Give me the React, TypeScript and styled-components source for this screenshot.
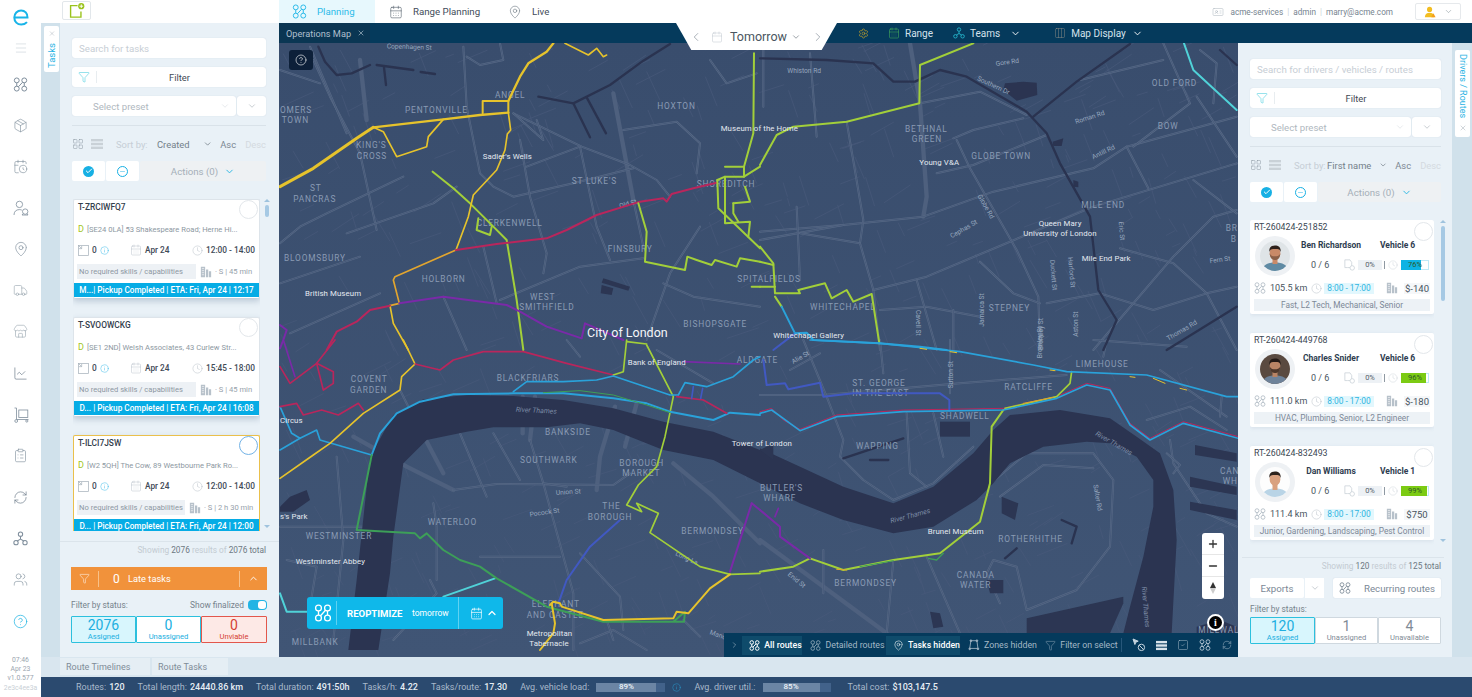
import React from "react";
import styled, { createGlobalStyle } from "styled-components";
import {
  Menu, Package, CalendarClock, MapPin, Truck, Store, ChartLine, ClipboardList, RefreshCw, Users,
  CircleHelp, Funnel, ChevronDown, ChevronUp, ChevronLeft, ChevronRight, LayoutGrid, Check, Minus, Info,
  Clock, Calendar, CalendarDays, Settings, X, Plus, IdCard, SquareCheck, Columns3,
} from "lucide-react";

const Global = createGlobalStyle`
  html, body { margin: 0; padding: 0; width: 1472px; height: 697px; overflow: hidden; background: #fff; }
  body { font-family: "Roboto", "Liberation Sans", sans-serif; color: #3c4a58; }
  * { box-sizing: border-box; }
`;

/* ---------- drawn icons ---------- */
const RouteIcon = ({ size = 14, color = "#7f8e9c", sw = 1 }: { size?: number; color?: string; sw?: number }) => (
  <svg width={size} height={size} viewBox="0 0 16 16" fill="none" stroke={color} strokeWidth={sw * 16 / size}>
    <circle cx="4" cy="3.6" r="2.6" /><circle cx="12" cy="3.6" r="2.6" />
    <circle cx="4" cy="12.4" r="2.6" /><circle cx="12" cy="12.4" r="2.6" />
    <path d="M4 6.2v3.6M12 6.2v3.6M10.2 5.6 5.8 10.4" />
  </svg>
);
const NodesIcon = ({ size = 14, color = "#7f8e9c" }: { size?: number; color?: string }) => (
  <svg width={size} height={size} viewBox="0 0 16 16" fill="none" stroke={color} strokeWidth="1.1">
    <circle cx="8" cy="3.4" r="2.3" /><circle cx="3.2" cy="12.4" r="2.3" /><circle cx="12.8" cy="12.4" r="2.3" />
    <path d="M8 5.7v3M8 8.7 4.5 10.6M8 8.7l3.5 1.9" />
  </svg>
);
const BarsIcon = ({ size = 12, color = "#c9d1d7", t = 2.4 }: { size?: number; color?: string; t?: number }) => (
  <svg width={size} height={size} viewBox="0 0 12 12" fill={color}>
    <rect x="0" y="1" width="12" height={t} /><rect x="0" y={6 - t / 2} width="12" height={t} /><rect x="0" y={11 - t} width="12" height={t} />
  </svg>
);
const UserPinIcon = ({ size = 16, color = "#7f8e9c" }: { size?: number; color?: string }) => (
  <svg width={size} height={size} viewBox="0 0 16 16" fill="none" stroke={color} strokeWidth=".8">
    <circle cx="6.4" cy="4.4" r="3.2" /><path d="M1 15c0-3.4 2-5.4 5.4-5.4 1 0 1.8.2 2.4.5" />
    <circle cx="12.2" cy="11.6" r="2.7" /><path d="M10.2 13.6 9 15h6l-1-1.4" />
  </svg>
);
const CartIcon = ({ size = 16, color = "#7f8e9c" }: { size?: number; color?: string }) => (
  <svg width={size} height={size} viewBox="0 0 16 16" fill="none" stroke={color} strokeWidth=".8">
    <path d="M1.5 1h2v11.5h12" /><rect x="5.8" y="3" width="9" height="7.5" /><circle cx="3.2" cy="14" r="1.4" /><circle cx="13.8" cy="14" r="1.1" />
  </svg>
);
const BuildingsIcon = ({ size = 12, color = "#b7c1ca" }: { size?: number; color?: string }) => (
  <svg width={size} height={size} viewBox="0 0 14 14" fill={color}>
    <path d="M1 1h5v12H1zM7 4h2.6v9H7zM10.4 6H13v7h-2.6z" />
    <path d="M2.2 3h2.6M2.2 5.4h2.6M2.2 7.8h2.6M2.2 10.2h2.6" stroke="#fff" strokeWidth=".7" />
  </svg>
);
const ParcelIcon = ({ size = 12, color = "#c8d0d7" }: { size?: number; color?: string }) => (
  <svg width={size} height={size} viewBox="0 0 14 14" fill="none" stroke={color} strokeWidth=".9">
    <path d="M1 1h6l2 3v4M1 1v9h3M4 10h3" /><circle cx="9.6" cy="10.4" r="2.6" />
  </svg>
);
const SizeIcon = () => (
  <svg width="11" height="11" viewBox="0 0 12 12" fill="none" stroke="#a7b2bc" strokeWidth=".8">
    <rect x=".5" y=".5" width="11" height="11" /><path d="m1 1 3 3M1 4h3V1" />
  </svg>
);
const ZoneIcon = () => (
  <svg width="12" height="12" viewBox="0 0 14 14" fill="none" stroke="#9fb3c2" strokeWidth="1">
    <path d="M3.4 2h7l1.2 9h-9.6z" /><circle cx="3.4" cy="2" r="1" fill="#9fb3c2" /><circle cx="10.4" cy="2" r="1" fill="#9fb3c2" />
    <circle cx="2" cy="11.5" r="1" fill="#9fb3c2" /><circle cx="11.6" cy="11.5" r="1" fill="#9fb3c2" />
  </svg>
);
const CursorOffIcon = () => (
  <svg width="14" height="14" viewBox="0 0 14 14" fill="none" stroke="#c5d4df" strokeWidth="1">
    <path d="M1 1l5.2 2.2-2.4 1-.9 2.3z" fill="#c5d4df" /><circle cx="9.4" cy="9.4" r="3.2" /><path d="m7.2 7.2 4.4 4.4" />
  </svg>
);
const LogoMark = () => (
  <svg width="16" height="17" viewBox="0 0 16 17" fill="none" stroke="#19b4e8" strokeWidth="2">
    <path d="M1.4 8.4h13.1c.1-4-2.6-7-6.4-7C4.300 1.400 1.300 4.500 1.300 8.500c0 4.200 3 7.100 6.900 7.100 2.500 0 4.400-.9 5.800-2.500" />
  </svg>
);
const AddTaskIcon = () => (
  <svg width="16" height="16" viewBox="0 0 15 15" fill="none">
    <path d="M8 2.500H1.500v10.700h9.700V8" stroke="#9ac31c" strokeWidth="1.300" />
    <circle cx="11.500" cy="3" r="2.900" fill="#9ac31c" /><path d="M11.500 1.300v3.400M9.800 3h3.400" stroke="#fff" strokeWidth=".9" />
  </svg>
);
const WarnUserIcon = () => (
  <svg width="12" height="12" viewBox="0 0 14 14" fill="#f2bd21">
    <circle cx="6.500" cy="4" r="3" /><path d="M1 13c.2-3.500 2.400-5 5.500-5s5.300 1.500 5.500 5z" />
    <path d="M11 8.500l2.500 4.500h-5z" fill="#f59e1b" />
  </svg>
);
const CheckDot = () => (
  <CheckCircleWrap><Check size={8} strokeWidth={3} color="#fff" /></CheckCircleWrap>
);
const MinusDot = () => (
  <MinusCircleWrap><Minus size={7} strokeWidth={1.600} color="#17b0e4" /></MinusCircleWrap>
);

/* ---------- portraits ---------- */
type Face = { bg: string; skin: string; hair: string; shirt: string; beard?: string };
const Portrait = ({ bg, skin, hair, shirt, beard }: Face) => (
  <svg width="30" height="30" viewBox="0 0 30 30">
    <clipPath id={"p" + hair + bg}><circle cx="15" cy="15" r="15" /></clipPath>
    <g clipPath={"url(#p" + hair + bg + ")"}>
      <rect width="30" height="30" fill={bg} />
      <path d="M2 31c0-7 5-9.500 13-9.500S28 24 28 31z" fill={shirt} />
      <rect x="12.500" y="17" width="5" height="6" fill={skin} />
      <ellipse cx="15" cy="12" rx="5.400" ry="6.800" fill={skin} />
      {beard && <path d="M9.700 12.500c.4 5 2.600 6.500 5.300 6.500s4.900-1.500 5.300-6.500c-1.300 2.500-3 2.800-5.300 2.800s-4-.3-5.300-2.800z" fill={beard} />}
      <path d="M9.400 11c-.6-4.500 1.800-6.600 5.600-6.600s6.200 2 5.600 6.600c-.6-2.500-1.600-3-5.600-3s-5 .5-5.600 3z" fill={hair} />
    </g>
  </svg>
);

/* ---------- map data (coordinates are in 3x crop space of four quadrants) ---------- */
type Route = [string, string, number?];
type Label = [string, number, number, "d" | "p" | "s" | "i", number?];
type Quad = {
  at: [number, number]; water: string[]; docks: string[]; canals: string[]; wide: string[]; roads: string[]; routes: Route[]; labels: Label[];
};
const Y = "#e6c32c", C = "#b9265c", V = "#7a2aa8", L = "#a2cf3a", B = "#2aa2da", G = "#3d9f58", I = "#4159c2", T = "#50d2d8";
const quads: Quad[] = [
  {
    at: [280, 40], water: [], docks: ["970,715 1050,740 1045,752 965,728", "965,735 1000,745 995,765 962,760"],
    canals: ["115,20 135,65 170,105 215,100 270,75", "290,75 400,90", "422,96 465,102", "312,82 318,135", "775,170 880,190 930,292", "880,190 990,135 1090,62 1170,12", "920,172 978,280"],
    wide: ["1000,160 1060,480", "240,60 260,240"],
    roads: ["100,60 150,170 240,340 290,570", "700,220 905,320 1050,375 1130,420 1170,470", "550,20 560,200 600,400 640,440 700,470 880,430 1060,385", "1060,480 1090,620", "200,580 460,490 530,440", "0,610 60,560 140,520 370,410", "900,320 950,560 990,660", "720,300 750,470 800,640 790,700", "1030,270 1190,245 1260,310 1250,400", "660,780 900,680 1090,655", "740,380 900,320", "1100,900 1170,700 1260,560", "490,770 560,930", "610,620 650,790", "1150,730 1240,770 1440,800", "0,730 240,650", "30,880 300,760", "560,50 600,75 670,60 660,10", "1290,60 1340,130 1430,100", "700,220 790,300 770,240", "0,90 120,130", "90,20 200,280"],
    routes: [
      [L, "458,395 520,445 570,490 640,560 680,600 710,780 730,930"], [L, "595,535 590,570 630,585 635,560"],
      [Y, "0,440 100,385 230,295 280,262", 9], [Y, "280,262 490,238 600,225 685,218", 7], [Y, "608,220 608,183 685,183 685,218"], [Y, "685,183 720,110 745,70 800,35 820,10", 7],
      [Y, "855,10 925,45 950,25 970,50 980,45", 5], [Y, "280,262 310,275 350,350 440,320 445,290 490,238", 5],
      [Y, "685,218 692,270 682,282 675,330 650,390 580,465 565,530 528,630", 5], ["#e2a52f", "528,630 345,710 340,720 358,790 330,797", 5], [Y, "330,797 340,850 385,930", 5],
      [C, "528,630 650,612 800,595 860,570 950,525 1080,485 1150,475 1160,485 1175,462 1240,445 1310,428"], [C, "330,797 270,810 230,845 170,875 140,930"],
      [V, "358,790 490,770 680,795 720,815 800,860 905,895 915,850 1030,900"], [V, "0,855 20,870 10,900 0,925"],
      [L, "1075,490 1100,575 1095,665 1215,690 1222,650 1250,660 1295,675 1305,660 1370,680 1380,655 1440,665"],
      [L, "1312,420 1315,505 1440,625"], [L, "1335,380 1392,380 1392,410 1335,410 1335,550 1410,545 1405,590"], [L, "1392,380 1420,280 1422,40"],
      [L, "1392,410 1440,380"], [L, "1312,420 1335,410"], [L, "1360,490 1410,485 1395,440"], [L, "1360,490 1360,520 1375,545"], [L, "1415,740 1440,740"],
    ],
    labels: [
      ["Copenhagen St", 320, 25, "s", 2], ["OMERS", 0, 218, "d"], ["TOWN", 5, 250, "d"], ["ANGEL", 645, 175, "d"], ["PENTONVILLE", 375, 218, "d"], ["HOXTON", 1132, 207, "d"],
      ["KING'S", 228, 325, "d"], ["CROSS", 230, 356, "d"], ["ST", 90, 453, "d"], ["PANCRAS", 40, 485, "d"], ["ST LUKE'S", 875, 431, "d"], ["CLERKENWELL", 590, 557, "d"],
      ["BLOOMSBURY", 12, 664, "d"], ["HOLBORN", 425, 725, "d"], ["WEST", 750, 781, "d"], ["SMITHFIELD", 718, 811, "d"], ["FINSBURY", 983, 635, "d"], ["SPITALFIELDS", 1372, 727, "d"],
      ["BISHOPSGATE", 1210, 861, "d"], ["SHOREDITCH", 1250, 440, "d"], ["Old St", 1020, 505, "s", -16],
      ["Museum of the Home", 1322, 272, "p"], ["Sadler's Wells", 608, 356, "p"], ["British Museum", 75, 767, "p"],
    ],
  },
  {
    at: [280, 340],
    water: ["0,500 30,470 80,450 90,480 40,515 0,515", "205,930 230,720 270,350 340,225 430,178 560,165 700,168 850,180 1000,205 1150,245 1300,275 1440,330 1440,430 1300,360 1150,330 1050,290 1000,270 900,250 800,262 640,262 560,275 440,300 370,370 340,590 330,700 295,930"],
    docks: [], canals: [],
    wide: ["390,210 490,400", "728,170 728,280", "765,170 750,300", "1005,200 960,350 950,450", "1070,190 1035,320", "220,290 380,380 520,450", "1180,370 1300,470 1440,610"],
    roads: ["520,450 650,432 1000,435 1050,400", "750,300 790,430 880,760 880,930", "900,640 1020,770 1030,870", "0,560 250,560", "900,910 1000,870 1100,930", "790,430 860,440", "340,900 470,760 450,720", "460,490 470,560 470,720", "170,350 190,600 160,900", "540,280 620,470", "600,650 840,650", "980,840 1000,900", "640,280 720,420", "1210,840 1260,890", "860,0 900,50", "1130,30 1300,130", "360,150 430,290", "20,660 110,680 90,800"],
    routes: [
      [B, "0,200 35,280 60,295 110,270 120,300 275,345", 5], [B, "0,330 60,295", 5],
      [C, "0,80 30,130 110,70 160,95 160,130 130,150 110,70", 5], [V, "10,0 45,110", 5], [C, "165,0 110,70", 5],
      [Y, "370,0 405,72 365,110 360,150 250,220 150,310 100,345 0,415", 5],
      [C, "405,72 480,90 520,60 610,35 730,35 860,70 1000,105", 5], [C, "0,200 50,190 70,225 125,210 175,225 235,190 250,210", 5],
      [L, "1100,15 1180,170 1155,290 1130,380 1075,435 1040,495 1085,515 1070,490 1135,520 1110,578 1260,680 1350,703 1440,700", 5],
      [L, "1040,0 1030,95 1000,105", 5], [L, "1040,5 1100,12", 5],
      [B, "275,345 300,280 350,220 420,185 520,163 700,160 850,160 1000,175 1100,190 1170,215 1300,240 1350,218 1440,225", 6],
      [G, "790,158 900,152 1000,165 1100,195 1170,218", 3],
      [B, "700,155 740,125 850,125 950,120 1000,108 1170,165 1195,165 1215,128 1280,140 1360,110 1420,60 1440,50", 5],
      [V, "1210,65 1380,72", 5], [C, "1190,170 1270,180 1340,220", 5], [I, "1240,140 1235,175", 5], [I, "1268,145 1262,175", 5],
      [I, "1020,540 930,620 860,720 835,790"], [V, "1415,490 1350,695"], [V, "1415,490 1440,510"],
      [T, "0,760 20,815 80,815"], [T, "490,770 645,715"],
      [G, "275,345 230,570 405,580 420,595 440,580 490,630 540,660 600,680 650,715 800,800 970,845 1180,845 1212,845 1215,815 1180,845"],
      [Y, "810,795 820,785 840,790 845,800 970,840 1180,835 1190,815 1225,820 1290,745 1350,703"],
      [Y, "815,790 825,850 820,880 780,930"],
    ],
    labels: [
      ["COVENT", 212, 127, "d"], ["GARDEN", 210, 158, "d"], ["BLACKFRIARS", 650, 123, "d"], ["BANKSIDE", 795, 286, "d"], ["SOUTHWARK", 720, 368, "d"], ["BOROUGH", 1018, 378, "d"],
      ["MARKET", 1027, 408, "d"], ["THE", 967, 508, "d"], ["BOROUGH", 923, 540, "d"], ["WATERLOO", 443, 556, "d"], ["WESTMINSTER", 77, 598, "d"], ["BERMONDSEY", 1204, 581, "d"],
      ["ELEPHANT", 755, 802, "d"], ["AND CASTLE", 740, 834, "d"], ["MILLBANK", 35, 915, "d"], ["ALDGATE", 1370, 68, "d"],
      ["Bank of England", 1043, 76, "p"], ["Circus", 0, 250, "p"], ["s's Park", 0, 538, "p"], ["Westminster Abbey", 47, 672, "p"], ["Metropolitan", 740, 888, "p"], ["Tabernacle", 748, 918, "p"], ["Tower of London", 1355, 318, "p"],
      ["River Thames", 707, 215, "i", 3], ["Union St", 828, 465, "s", -4], ["Pocock St", 750, 530, "s", -8], ["Long La", 1185, 645, "s", 25], ["Mandela", 1288, 882, "s", 20],
    ],
  },
  {
    at: [760, 40], water: ["735,130 790,125 830,128 832,165 770,182 730,150", "878,305 910,295 905,318 880,318", "940,420 955,425 955,442 940,440"], docks: [],
    canals: ["0,55 200,60 340,70 400,125 465,125 540,90 620,110 800,215 860,280 900,370 990,530 1015,750 1070,840 1030,930", "1220,930 1430,800", "820,230 950,125 1110,12", "1380,30 1430,75"],
    wide: ["450,10 480,190 500,470 490,530"],
    roads: ["1430,230 1100,320 1000,385 700,455 490,530 250,555 0,575", "0,600 250,555", "480,190 660,155 800,225", "580,295 640,270 790,235", "590,300 630,385 770,630 835,770 840,930", "260,245 310,540 300,610 340,750 360,930", "340,750 500,710 1000,500 1430,370", "530,400 640,375 860,285", "1100,320 1165,445", "1310,170 1430,350", "1210,10 1290,190 1120,320", "860,790 1020,760 1180,810 1340,760 1430,740", "660,665 760,760 840,790", "360,810 500,800 660,830", "1080,625 1240,670 1340,760 1430,930", "1000,930 1240,650 1360,530 1430,510", "960,120 1210,60", "110,500 120,720", "10,10 10,200", "150,40 170,290", "1300,420 1430,520", "470,720 530,930", "580,810 580,930", "1320,30 1370,70 1360,190", "120,580 300,610"],
    routes: [
      [L, "640,10 480,75 478,190 260,245 100,260 50,285 0,375"], [T, "1272,10 1300,90 1430,210"],
      [L, "0,620 40,670 45,760 120,760 115,750 195,730 215,775 260,750 280,785 335,762 358,910"], [L, "0,665 40,675"], [L, "0,740 45,740"],
      [L, "45,770 65,800"], [B, "65,800 105,880"], [I, "105,880 40,930"], [B, "105,880 140,878 160,900 358,910 480,920 560,930"],
    ],
    labels: [
      ["BETHNAL", 435, 275, "d"], ["GREEN", 455, 306, "d"], ["GLOBE TOWN", 634, 358, "d"], ["OLD FORD", 1175, 138, "d"], ["BOW", 1193, 266, "d"], ["MILE END", 964, 503, "d"], ["WHITECHAPEL", 150, 810, "d"], ["STEPNEY", 686, 813, "d"],
      ["BR", 1397, 573, "d"], ["B", 1412, 605, "d"],
      ["Young V&A", 478, 375, "p"], ["Queen Mary", 836, 557, "p"], ["University of London", 790, 587, "p"], ["Mile End Park", 965, 663, "p"], ["Whitechapel Gallery", 40, 895, "p"],
      ["Whiston Rd", 82, 100, "s"], ["Gore Rd", 708, 78, "s", -8], ["Southern Dr", 650, 120, "s", 25], ["Roman Rd", 948, 252, "s", -18], ["Antill Rd", 1000, 358, "s", -26], ["Globe Rd", 652, 468, "s", 60],
      ["Cephas St", 575, 595, "s", -30], ["Eric St", 1076, 545, "s", 85], ["Fern St", 1350, 670, "s", -8], ["Duckett St", 870, 660, "s", 85], ["Harford St", 924, 652, "s", 85], ["Jamaica St", 672, 860, "s", -90],
      ["Cavell St", 468, 810, "s", 90], ["Aston St", 953, 890, "s", -90], ["Bromley St", 848, 930, "s", -90], ["Thomas Rd", 1225, 902, "s", -30],
    ],
  },
  {
    at: [760, 340],
    water: ["0,325 130,385 250,440 400,490 520,440 640,340 700,270 750,225 900,210 1050,235 1130,290 1200,340 1240,450 1250,600 1235,880 1090,880 1110,800 1150,650 1180,500 1180,420 1130,350 1050,310 980,305 850,320 750,370 700,430 650,480 520,560 400,580 250,540 120,490 0,430"],
    docks: ["1305,315 1430,340 1430,365 1305,345", "1290,410 1430,440 1430,465 1290,440", "1290,485 1430,510 1430,540 1290,510", "800,835 1090,770 1090,790 1050,880 800,880", "540,245 630,245 630,290 540,290", "725,470 775,490 765,540 725,520", "510,815 540,820 550,860 520,865", "680,720 730,720 730,760 690,760", "1310,860 1380,840 1430,860 1430,880 1310,880", "0,330 40,310 40,360"],
    canals: ["250,355 430,295", "330,360 385,360", "905,540 950,560 935,610", "735,655 770,625"],
    wide: ["0,600 380,880"],
    roads: ["0,165 190,165 600,130 920,105", "130,0 200,170 250,300 240,350 310,420 400,480 520,430 640,320", "440,220 450,400 500,440", "520,220 550,350", "1160,240 1290,200 1400,270", "1230,300 1240,370 1340,520 1430,560", "680,440 800,340 1000,340 1060,420 1050,620 950,750 800,810 770,680 700,660 680,700 720,790", "720,470 850,375 1000,385", "400,660 380,880", "500,650 600,880", "360,0 370,100", "570,0 570,160", "1000,0 1280,20", "1200,90 1400,230", "1385,170 1380,230", "190,630 190,760", "1220,340 1260,375 1240,400", "1040,0 1030,50", "90,90 180,40"],
    routes: [
      [C, "0,215 35,205 70,240 120,268 230,225 430,210 730,205 890,170 980,130 1050,145 1110,250 1170,295 1270,245 1435,290", 3],
      [L, "735,205 890,170 930,130 935,95", 5], ["#e29a2f", "790,190 880,172", 3],
      [L, "730,210 695,260 690,430 660,545 540,640 400,660 250,690 150,655 100,680 0,695"], [G, "400,662 300,680", 3], ["#e2a52f", "230,688 260,690", 3], [G, "505,655 530,660 550,640", 4],
      [B, "150,0 360,10 600,35 820,75 920,95 1160,105 1400,170 1435,170", 5], [Y, "480,25 500,28", 3], [Y, "570,35 590,38", 3], [Y, "870,90 885,92", 3], [Y, "1110,110 1125,112", 3], [Y, "1180,115 1215,130", 3], [Y, "1260,145 1280,150", 3],
      [I, "10,60 20,135 75,130 85,148 180,128 190,170 280,160 540,160 568,180 568,212"],
      [B, "0,220 35,210 120,272 230,230 430,215 730,210 890,175 980,135 1050,150 1110,255 1170,300 1270,250 1435,295", 5],
      [V, "0,510 60,560 60,590 150,655"], [V, "45,530 55,505", 5],
    ],
    labels: [
      ["LIMEHOUSE", 947, 80, "d"], ["ST. GEORGE", 277, 138, "d"], ["IN THE EAST", 277, 168, "d"], ["RATCLIFFE", 733, 150, "d"], ["SHADWELL", 540, 236, "d"], ["WAPPING", 288, 328, "d"], ["BUTLER'S", 0, 452, "d"], ["WHARF", 10, 482, "d"],
      ["ROTHERHITHE", 715, 605, "d"], ["CANADA", 590, 714, "d"], ["WATER", 600, 744, "d"], ["BERMONDSEY", 223, 737, "d"], ["MILLWAL", 1315, 880, "d"], ["CAN", 1380, 403, "d"], ["WH", 1388, 433, "d"],
      ["Brunel Museum", 503, 582, "p"],
      ["Alie St", 100, 72, "s", -30], ["Sutton St", 578, 145, "s", -90], ["Bromley St", 847, 55, "s", -90], ["Salter Rd", 1000, 435, "s", 80], ["Enid St", 82, 705, "s", 40],
      ["River Thames", 393, 550, "i", -15], ["River Thames", 1005, 285, "i", 30], ["River Thames", 1145, 740, "i", 85],
    ],
  },
];

let seed = 12345;
const rnd = () => { seed = (seed * 1103515245 + 12345) & 0x7fffffff; return seed / 0x7fffffff; };
const streets = Array.from({ length: 620 }, () => {
  const x = 279 + rnd() * 959, y = 43 + rnd() * 614, l = 8 + rnd() * 26, a = (rnd() > .5 ? -.45 : 1.15) + (rnd() - .5) * .3;
  return `M${x.toFixed(1)} ${y.toFixed(1)}l${(Math.cos(a) * l).toFixed(1)} ${(Math.sin(a) * l).toFixed(1)}`;
}).join("");

const labelStyle = {
  d: { fontSize: 25, letterSpacing: 2.5, fill: "#8a9bb4", fontWeight: 400 },
  p: { fontSize: 23.5, letterSpacing: .3, fill: "#e4e9f0", fontWeight: 400 },
  s: { fontSize: 20, letterSpacing: 0, fill: "#97a7be", fontWeight: 400 },
  i: { fontSize: 21, letterSpacing: 0, fill: "#7d8ca6", fontWeight: 400, fontStyle: "italic" as const },
};

const MapCanvas = () => {
  const layer = (render: (q: Quad) => React.ReactNode) =>
    quads.map((q, i) => (
      <g key={i} transform={`translate(${q.at[0]} ${q.at[1]}) scale(${1 / 3})`} fill="none" strokeLinejoin="round" strokeLinecap="round">{render(q)}</g>
    ));
  return (
    <MapSvg viewBox="279 43 959 614" width="959" height="614">
      <defs>
        <linearGradient id="land" x1="0" y1="0" x2="0" y2="1">
          <stop offset="0" stopColor="#394d6d" /><stop offset="1" stopColor="#405575" />
        </linearGradient>
      </defs>
      <rect x="279" y="43" width="959" height="614" fill="url(#land)" />
      <path d={streets} stroke="#47597a" strokeWidth=".7" fill="none" />
      {layer((q) => q.wide.map((p, i) => <polyline key={i} points={p} stroke="#4e607e" strokeWidth="13" />))}
      {layer((q) => q.roads.map((p, i) => (
        <g key={i}><polyline points={p} stroke="#596b87" strokeWidth="6" /><polyline points={p} stroke="#475a7a" strokeWidth="3" /></g>
      )))}
      {layer((q) => q.water.map((p, i) => <polygon key={i} points={p} fill="#2b3451" />))}
      {layer((q) => q.docks.map((p, i) => <polygon key={i} points={p} fill="#2c3653" />))}
      {layer((q) => q.canals.map((p, i) => <polyline key={i} points={p} stroke="#2a3350" strokeWidth="7" />))}
      {layer((q) => q.labels.filter((l) => l[3] !== "p").map((l, i) => (
        <MapText key={i} x={l[1]} y={l[2]} style={labelStyle[l[3]]} transform={l[4] ? `rotate(${l[4]} ${l[1]} ${l[2]})` : undefined}>{l[0]}</MapText>
      )))}
      {layer((q) => q.routes.map((r, i) => <polyline key={i} points={r[1]} stroke={r[0]} strokeWidth={r[2] ?? 6} />))}
      {layer((q) => q.labels.filter((l) => l[3] === "p").map((l, i) => (
        <MapText key={i} x={l[1]} y={l[2]} style={labelStyle.p}>{l[0]}</MapText>
      )))}
      <MapText x="587" y="337" style={{ fontSize: 12.5, fill: "#f4f6f9", fontWeight: 400 }}>City of London</MapText>
    </MapSvg>
  );
};

/* ---------- page frame ---------- */
const Page = styled.div`width: 1472px; height: 697px; display: flex; overflow: hidden; background: #fff;`;
const Rail = styled.nav`width: 41px; flex: none; display: flex; flex-direction: column; align-items: center; background: #fff;`;
const LogoCell = styled.div`height: 36px; padding-top: 9px;`;
const RailIcon = styled.div`height: 41.3px; width: 41px; display: flex; align-items: center; justify-content: center; flex: none;`;
const RailMenu = styled(RailIcon)`height: 24px; margin-bottom: 3.500px;`;
const BuildInfo = styled.div`margin-top: 14px; font-size: 6.8px; line-height: 9.4px; color: #9aa5af; text-align: center;`;
const BuildHash = styled.div`color: #c9d0d6;`;
const Main = styled.div`flex: 1; min-width: 0; display: flex; flex-direction: column;`;
const TopBar = styled.header`height: 23px; flex: none; display: flex; align-items: stretch; background: #fff;`;
const AddCell = styled.div`width: 238px; padding: 1px 0 0 21px;`;
const AddButton = styled.div`width: 29px; height: 19px; border: 1px solid #e2e7eb; border-radius: 2px; display: flex; align-items: center; justify-content: center;`;
const TopTab = styled.div<{ $on?: boolean; $w?: number }>`
  width: ${(p) => (p.$w ? p.$w + "px" : "auto")}; display: flex; align-items: center; gap: 10px; white-space: nowrap;
  padding-left: ${(p) => (p.$on ? "13px" : "14px")}; font-size: 9.7px; color: ${(p) => (p.$on ? "#2cbbe9" : "#3f4c5a")};
  background: ${(p) => (p.$on ? "#e7f8fd" : "transparent")};
`;
const Account = styled.div`margin-left: auto; display: flex; align-items: center; font-size: 8.2px; color: #76838f; gap: 3px; white-space: nowrap;`;
const AccountIcon = styled.span`display: flex; margin-right: 3px;`;
const AccountSep = styled.span`color: #ccd3d9; padding: 0 1px;`;
const UserButton = styled.div`width: 46px; height: 17px; margin: 0 11px 0 19px; border: 1px solid #e6e9ec; border-radius: 2px; display: flex; align-items: center; justify-content: center; gap: 8px;`;
const Body = styled.div`height: 634px; flex: none; display: flex;`;
const Workspace = styled.div`flex: 1; min-width: 0; display: flex; flex-direction: column; position: relative;`;
const NavBar = styled.div`height: 20px; flex: none; display: flex; align-items: center; background: #053a5c; color: #d5e2ec; font-size: 10px;`;
const OpsTab = styled.div`width: 91px; height: 20px; flex: none; display: flex; align-items: center; justify-content: space-between; padding: 0 5px 0 7px; background: #0a3653; color: #aebfcd; font-size: 9.2px; white-space: nowrap;`;
const NavItems = styled.div`display: flex; align-items: center; margin-left: 488px;`;
const NavItem = styled.div<{ $gap?: number }>`display: flex; align-items: center; gap: 5px; margin-right: ${(p) => p.$gap ?? 0}px;`;
const DateSwitch = styled.div`
  position: absolute; left: 397px; top: 0; width: 161px; height: 27px; background: #fff; z-index: 3;
  clip-path: polygon(0 0, 100% 0, 90.5% 100%, 9.500% 100%);
  display: flex; align-items: center; color: #4a5661; font-size: 12.5px; padding-left: 13px;
`;
const DateLabel = styled.span`margin: 0 4px 0 7px;`;
const DateCal = styled.span`margin-left: 8px; display: flex;`;
const DateNext = styled.span`margin-left: 10px; display: flex;`;
const Stage = styled.div`flex: 1; min-height: 0; display: flex;`;
const MapArea = styled.main`width: 959px; height: 614px; flex: none; position: relative; overflow: hidden; background: #394d6d;`;
const MapSvg = styled.svg`display: block; font-family: "Roboto", "Liberation Sans", sans-serif;`;
const MapText = styled.text``;
const HelpChip = styled.div`position: absolute; left: 10px; top: 7px; width: 24px; height: 20px; background: #0d2039; border-radius: 3px; display: flex; align-items: center; justify-content: center;`;
const Reopt = styled.div`position: absolute; left: 28px; top: 554px; width: 196px; height: 32px; background: #0fb8ea; border-radius: 3px; display: flex; align-items: center; color: #fff;`;
const ReoptIcon = styled.div`width: 23px; height: 24px; margin-left: 7px; display: flex; align-items: center; border-right: 1px solid #5fd2f2;`;
const ReoptTitle = styled.span`margin-left: 10px; font-size: 9.6px; font-weight: 700; width: 65px;`;
const ReoptSub = styled.span`font-size: 8.5px; width: 46px;`;
const ReoptMenu = styled.div`height: 32px; border-left: 1px solid #5fd2f2; padding-left: 11px; display: flex; align-items: center; gap: 3px;`;
const ZoomBox = styled.div`position: absolute; left: 923px; top: 490px; width: 22px; height: 66px; background: #fff; border-radius: 3px; display: grid; grid-template-rows: repeat(3, 1fr);`;
const ZoomCell = styled.div`display: flex; align-items: center; justify-content: center; border-bottom: 1px solid #e6e6e6; &:last-child { border: 0; }`;
const Compass = styled.div`display: flex; flex-direction: column; align-items: center; gap: 0;`;
const ArrowUp = styled.i`width: 0; height: 0; border: 3.500px solid transparent; border-top: 0; border-bottom: 6px solid #333;`;
const ArrowDown = styled.i`width: 0; height: 0; border: 3.500px solid transparent; border-bottom: 0; border-top: 6px solid #ccc;`;
const InfoChip = styled.div`position: absolute; left: 928px; top: 571px; width: 17px; height: 17px; border-radius: 50%; background: #000; border: 2px solid #fff; color: #fff; font: 700 10px/13px "Liberation Serif", serif; text-align: center;`;
const MapTools = styled.div`position: absolute; right: 0; bottom: 0; width: 514px; height: 24px; background: #053a5c; display: flex; align-items: center; color: #a3b8c6; font-size: 8.8px; padding-left: 6px;`;
const ToolItem = styled.div<{ $on?: boolean; $w: number; $ml?: number }>`
  width: ${(p) => p.$w}px; height: 19px; display: flex; align-items: center; justify-content: center; gap: 4px; flex: none; white-space: nowrap;
  margin-left: ${(p) => p.$ml ?? 0}px; padding-left: 7px;
  background: ${(p) => (p.$on ? "#0f4b6b" : "transparent")}; color: ${(p) => (p.$on ? "#fff" : "#a3b8c6")}; font-weight: ${(p) => (p.$on ? 500 : 400)};
`;
const ToolSep = styled.i`width: 1px; height: 14px; margin: 0 6px 0 3px; background: #27577a; flex: none;`;
const ToolIcon = styled.div`width: 22px; flex: none; display: flex; justify-content: center;`;

/* ---------- side panels ---------- */
const SideStrip = styled.div`width: 19px; flex: none; background: #d0e1eb; padding: 3px 0 0 3px;`;
const RightStrip = styled(SideStrip)`width: 20px; padding: 7px 0 0 3px;`;
const SideTab = styled.div<{ $h: number }>`
  width: 15px; height: ${(p) => p.$h}px; background: #fff; border-radius: 2px; display: flex; flex-direction: column; align-items: center; gap: 6px; padding: 4px 0;
  color: #2bb4e4; font-size: 9.5px;
`;
const VerticalUp = styled.span`writing-mode: vertical-rl; transform: rotate(180deg); white-space: nowrap;`;
const VerticalDown = styled.span`writing-mode: vertical-rl; white-space: nowrap; flex: none; font-size: 9px;`;
const Panel = styled.aside<{ $w: number; $pt: number; $pl: number; $pr: number }>`
  width: ${(p) => p.$w}px; flex: none; background: #e9f1f7; display: flex; flex-direction: column;
  padding: ${(p) => p.$pt}px ${(p) => p.$pr}px 0 ${(p) => p.$pl}px;
`;
const Field = styled.div`height: 20px; flex: none; background: #fff; border-radius: 3px; font-size: 9.7px; color: #c7ced5; display: flex; align-items: center; padding-left: 7px; box-shadow: 0 0 1px rgba(90,120,150,.25); white-space: nowrap;`;
const FilterBtn = styled(Field)`margin-top: 9px; padding-left: 6px; color: #3f4a55; font-size: 9.4px;`;
const FilterIcon = styled.div`width: 19px; height: 12px; border-right: 1px solid #e8edf0; display: flex; align-items: center; margin-right: 0;`;
const FilterLabel = styled.span`flex: 1; text-align: center; padding-right: 4px;`;
const Preset = styled.div`margin-top: 9px; display: flex; gap: 1px; height: 20px; flex: none;`;
const PresetMain = styled(Field)`flex: 1; padding: 0 6px 0 21px; justify-content: space-between; color: #b0b8c0; font-size: 9.6px;`;
const PresetMore = styled(Field)`width: 29px; justify-content: center; padding: 0;`;
const Rule = styled.div`height: 1px; flex: none; background: #d9e2e9; margin-top: 9px;`;
const SortRow = styled.div`margin-top: 9px; height: 18px; flex: none; display: flex; align-items: center; font-size: 9.4px; color: #8b96a0; white-space: nowrap;`;
const SortIcons = styled.div`display: flex; align-items: center; gap: 7px; width: 44px; flex: none;`;
const SortFaint = styled.span`color: #c6ced6; width: 30px; flex: none;`;
const SortChosen = styled.span<{ $w: number; $ml: number }>`width: ${(p) => p.$w}px; margin-left: ${(p) => p.$ml}px; flex: none; color: #737f8a;`;
const SortDesc = styled.span`margin-left: 9px; color: #d4dae0;`;
const SortAsc = styled.span`margin-left: 8px; color: #7c8792;`;
const ActionRow = styled.div`margin-top: 8px; height: 20px; flex: none; display: flex; gap: 1px;`;
const ActionCell = styled.div`width: 33px; background: #fff; display: flex; align-items: center; justify-content: center; border-radius: 2px;`;
const ActionMenu = styled.div`flex: 1; background: #eef1f3; font-size: 9.7px; color: #a5afb8; display: flex; align-items: center; justify-content: center; gap: 6px; border-radius: 2px;`;
const CheckCircleWrap = styled.div`width: 11px; height: 11px; border-radius: 50%; background: #17b0e4; display: flex; align-items: center; justify-content: center;`;
const MinusCircleWrap = styled.div`width: 11px; height: 11px; border-radius: 50%; border: 1px solid #17b0e4; display: flex; align-items: center; justify-content: center;`;
const ListRow = styled.div<{ $h: number; $mt: number }>`margin-top: ${(p) => p.$mt}px; height: ${(p) => p.$h}px; flex: none; display: flex; align-items: stretch;`;
const CardList = styled.div<{ $w: number; $ml: number; $gap: number }>`width: ${(p) => p.$w}px; margin-left: ${(p) => p.$ml}px; flex: none; overflow: hidden; display: flex; flex-direction: column; gap: ${(p) => p.$gap}px; padding-bottom: 3px;`;
const Track = styled.div<{ $ml: number }>`width: 8px; margin-left: ${(p) => p.$ml}px; display: flex; flex-direction: column; align-items: center;`;
const TrackUp = styled.i`width: 0; height: 0; border: 3px solid transparent; border-top: 0; border-bottom: 3.500px solid #9fc3de;`;
const TrackDown = styled.i`margin-top: auto; margin-bottom: 3px; width: 0; height: 0; border: 3px solid transparent; border-bottom: 0; border-top: 3.500px solid #9fc3de;`;
const TrackThumb = styled.i<{ $h: number }>`width: 4px; height: ${(p) => p.$h}px; margin-top: 3px; border-radius: 2px; background: #a6c9e4;`;

const TaskCardBox = styled.article<{ $hot?: boolean }>`
  height: 99px; flex: none; position: relative; background: #fff; display: flex; flex-direction: column; border-radius: 2px;
  border: 1px solid ${(p) => (p.$hot ? "#eac04c" : "#dde4ea")}; border-bottom: 0;
  box-shadow: 0 3px 6px rgba(60,90,125,.28); 
`;
const CardId = styled.div`height: 15px; padding: 2px 0 0 4px; font-size: 8.4px; font-weight: 500; color: #33404c;`;
const Tick = styled.i<{ $hot?: boolean }>`position: absolute; right: 1px; top: 0; width: 19px; height: 19px; border-radius: 50%; border: 1px solid ${(p) => (p.$hot ? "#72b2e6" : "#e3e7eb")}; background: #fff;`;
const CardAddr = styled.div`margin-top: 6px; height: 16px; padding-left: 4px; display: flex; align-items: center; font-size: 7.6px; color: #8d98a2; white-space: nowrap;`;
const LimeD = styled.span`color: #9fc522; margin-right: 3px; font-size: 9px;`;
const CardMeta = styled.div`margin-top: 5px; height: 16px; padding-left: 4px; display: grid; grid-template-columns: 52px 62px 1fr; align-items: center; font-size: 8.3px; font-weight: 500; color: #3f4b57; white-space: nowrap;`;
const MetaPart = styled.div`display: flex; align-items: center; gap: 3px;`;
const CardSkills = styled.div`margin-top: 6px; height: 15px; padding-left: 3px; display: flex; align-items: center; font-size: 7.6px; color: #97a2ab; white-space: nowrap;`;
const SkillsTag = styled.span<{ $w?: number }>`background: #edf1f5; height: 15px; display: flex; align-items: center; padding: 0 2px; margin-right: 4px; color: #8d98a3; min-width: ${(p) => p.$w ?? 0}px;`;
const Duration = styled.span`margin-left: 3px;`;
const CardStatus = styled.div`margin-top: 4px; height: 14px; background: #06ace5; color: #fff; font-size: 8.2px; font-weight: 500; display: flex; align-items: center; justify-content: center; white-space: nowrap;`;

const RouteCardBox = styled.article`height: 94px; flex: none; position: relative; background: #fff; border-radius: 2px; padding: 0 2px 0 4px; box-shadow: 0 1px 4px rgba(70,100,130,.12);`;
const RouteId = styled.div`height: 14px; padding-top: 2px; font-size: 8.8px; color: #3b4753;`;
const RouteTick = styled(Tick)`right: 1px; top: 2px; z-index: 1;`;
const RouteMid = styled.div`height: 43px; display: flex;`;
const AvatarRing = styled.div`width: 40px; height: 40px; margin: 2px 6px 0 1px; border-radius: 50%; background: #eef1f4; display: flex; align-items: center; justify-content: center; flex: none;`;
const RouteInfo = styled.div`flex: 1; display: flex; flex-direction: column;`;
const NameRow = styled.div`margin-top: 4px; height: 14px; display: grid; grid-template-columns: 60px 1fr; align-items: center; font-size: 8.5px; font-weight: 700; color: #2e3d50; white-space: nowrap;`;
const NameCell = styled.span`text-align: center;`;
const VehicleCell = styled.span`padding-left: 19px;`;
const StatRow = styled.div`margin-top: 6px; height: 14px; display: flex; align-items: center; font-size: 8.8px; color: #4a5662;`;
const Trips = styled.span`width: 43px; padding-left: 10px; font-size: 9px;`;
const LoadPill = styled.span`width: 24px; height: 10px; margin-left: 2px; background: #edf1f5; font-size: 7.5px; text-align: center; line-height: 10px; color: #555f69;`;
const Pipe = styled.i`width: 1px; height: 8px; margin: 0 3px 0 2px; background: #8f99a2;`;
const Meter = styled.div`width: 28px; height: 10px; margin-left: 3px; background: #fff; border: 1px solid #bfe9f7; position: relative; font-size: 7.5px; text-align: center; line-height: 8px; color: #2f5a2a;`;
const MeterFill = styled.i<{ $c: string }>`position: absolute; left: -1px; top: -1px; bottom: -1px; background: ${(p) => p.$c};`;
const MeterText = styled.span`position: relative;`;
const MetricRow = styled.div`margin-top: 3px; height: 16px; display: flex; align-items: center; font-size: 9px; color: #475460; white-space: nowrap;`;
const Km = styled.span`width: 41px; margin-left: 4px;`;
const TimePill = styled.span`margin-left: 2px; width: 50px; height: 11px; background: #e2f7fd; color: #2fb5df; font-size: 8.4px; line-height: 11px; text-align: center;`;
const CostIcon = styled.span`margin-left: 12px; width: 18px; display: flex;`;
const Cost = styled.span`width: 26px; text-align: center; font-size: 9.5px; background: #f5f7f9;`;
const RouteSkills = styled.div`margin: 3px 2px 0 0; height: 12px; background: #edf2f6; font-size: 8.3px; color: #7c8896; text-align: center; line-height: 12px; white-space: nowrap;`;

const PanelFoot = styled.div<{ $ml: number; $mr: number; $mt: number }>`margin: ${(p) => p.$mt}px ${(p) => -p.$mr}px 0 ${(p) => -p.$ml}px; border-top: 1px solid #dbe4eb; flex: none;`;
const Showing = styled.div`height: 17px; flex: none; text-align: right; font-size: 8.3px; color: #6d7882; line-height: 17px; white-space: nowrap;`;
const Faint = styled.span`color: #c3cbd2;`;
const LateBar = styled.div`margin: 8px -1px 0; height: 23px; flex: none; background: #f1923b; color: #fff; display: flex; align-items: center; font-size: 10px;`;
const LateIcon = styled.div`width: 28px; height: 16px; border-right: 1px solid #f8c188; display: flex; align-items: center; padding-left: 8px;`;
const LateCount = styled.span`margin-left: 14px; font-size: 12px; width: 15px;`;
const LateLabel = styled.span`flex: 1; font-size: 9.3px; font-weight: 400;`;
const LateMore = styled.div`width: 28px; height: 16px; border-left: 1px solid #f8c188; display: flex; align-items: center; justify-content: center;`;
const FinalRow = styled.div`margin: 10px -1px 0; height: 10px; flex: none; display: flex; align-items: center; justify-content: space-between; font-size: 8.4px; color: #76828c; white-space: nowrap;`;
const FinalRight = styled.div`display: flex; align-items: center; gap: 4px;`;
const Toggle = styled.div`width: 19px; height: 10px; border-radius: 4px; background: #22b4e4; display: flex; justify-content: flex-end; padding: 1px;`;
const ToggleKnob = styled.i`width: 8px; height: 8px; border-radius: 3px; background: #fff;`;
const StatusGrid = styled.div<{ $mt: number; $mx: number; $c2: number }>`margin: ${(p) => p.$mt}px ${(p) => p.$mx}px 0; height: 27px; flex: none; display: grid; grid-template-columns: 65px ${(p) => p.$c2}px 1fr;`;
const tones = {
  on: { bg: "#d8f6fd", bd: "#2cc0dd", fg: "#20aee0" },
  cyan: { bg: "#fff", bd: "#2cc0dd", fg: "#20aee0" },
  red: { bg: "#fde9e6", bd: "#e2574c", fg: "#d43d33" },
  off: { bg: "#fff", bd: "#cfd8df", fg: "#7f8b96" },
};
const StatusBox = styled.div<{ $t: keyof typeof tones }>`
  background: ${(p) => tones[p.$t].bg}; border: 1px solid ${(p) => tones[p.$t].bd}; color: ${(p) => tones[p.$t].fg};
  display: flex; flex-direction: column; align-items: center; justify-content: center; border-radius: 1px;
`;
const StatusNum = styled.b`font-size: 14px; line-height: 14px; font-weight: 400;`;
const StatusName = styled.span`font-size: 7.6px; line-height: 9px;`;
const ExportRow = styled.div`margin-top: 3px; height: 20px; flex: none; display: flex; font-size: 9.7px; color: #7b8896; white-space: nowrap;`;
const ExportBtn = styled.div`width: 54px; background: #fff; display: flex; align-items: center; justify-content: center; border-radius: 2px;`;
const ExportMore = styled.div`width: 19px; margin-left: 1px; background: #fff; display: flex; align-items: center; justify-content: center;`;
const Recurring = styled.div`width: 108px; margin-left: 9px; background: #fff; display: flex; align-items: center; padding-left: 6px; gap: 13px; border-radius: 2px; box-shadow: 0 0 1px rgba(90,120,150,.3);`;
const FilterBy = styled.div`margin-top: 6px; height: 10px; line-height: 10px; font-size: 8.4px; color: #76828c; flex: none;`;

const BottomTabs = styled.div`height: 20px; flex: none; display: flex; padding: 1px 0 2px 19px; gap: 2px; background: #d9e6ef; font-size: 9px; color: #7f8c98;`;
const BottomTab = styled.div<{ $w: number }>`width: ${(p) => p.$w}px; background: #e5eef4; display: flex; align-items: center; padding-left: 6px; white-space: nowrap;`;
const StatusBar = styled.footer`height: 20px; flex: none; display: flex; align-items: center; padding-left: 35px; gap: 13px; background: #2b4a6f; color: #a9b9cb; font-size: 9px; white-space: nowrap;`;
const Stat = styled.div`display: flex; align-items: center; gap: 3px;`;
const StatVal = styled.b`color: #e6edf4; font-weight: 500;`;
const Bar = styled.div<{ $w: number }>`width: ${(p) => p.$w}px; height: 9px; margin: 0 4px; background: #42628a; position: relative;`;
const BarFill = styled.div`height: 9px; background: #6b85a4; color: #eef3f8; font-size: 8px; font-weight: 500; line-height: 8px; text-align: center;`;

type Task = { id: string; addr: string; time: string; skills: string; dur: string; status: string; hot?: boolean };
const tasks: Task[] = [
  { id: "T-ZRCIWFQ7", addr: "[SE24 0LA] 53 Shakespeare Road; Herne Hi...", time: "12:00 - 14:00", skills: "No required skills / capabilities", dur: "· S | 45 min", status: "M...| Pickup Completed | ETA: Fri, Apr 24 | 12:17" },
  { id: "T-SVOOWCKG", addr: "[SE1 2ND] Welsh Associates, 43 Curlew Str...", time: "15:45 - 18:00", skills: "No required skills / capabilities", dur: "· S | 45 min", status: "D... | Pickup Completed | ETA: Fri, Apr 24 | 16:08" },
  { id: "T-ILCI7JSW", addr: "[W2 5QH] The Cow, 89 Westbourne Park Ro...", time: "12:00 - 14:00", skills: "No required skills / capabilities", dur: "· S | 2 h 30 min", status: "D... | Pickup Completed | ETA: Fri, Apr 24 | 12:00", hot: true },
];
type Rt = { id: string; name: string; veh: string; util: number; km: string; cost: string; skills: string; face: Face };
const routes: Rt[] = [
  { id: "RT-260424-251852", name: "Ben Richardson", veh: "Vehicle 6", util: 76, km: "105.5 km", cost: "$-140", skills: "Fast, L2 Tech, Mechanical, Senior", face: { bg: "#dfe4e7", skin: "#c88a68", hair: "#2e211b", shirt: "#5f8aa3", beard: "#8a6048" } },
  { id: "RT-260424-449768", name: "Charles Snider", veh: "Vehicle 6", util: 96, km: "111.0 km", cost: "$-180", skills: "HVAC, Plumbing, Senior, L2 Engineer", face: { bg: "#5a4a40", skin: "#b98465", hair: "#241a16", shirt: "#6e8299", beard: "#4e382c" } },
  { id: "RT-260424-832493", name: "Dan Williams", veh: "Vehicle 1", util: 99, km: "111.4 km", cost: "$750", skills: "Junior, Gardening, Landscaping, Pest Control", face: { bg: "#fdfdfd", skin: "#d9a17f", hair: "#2d231d", shirt: "#b9d4e6" } },
];

const TaskCard = ({ t }: { t: Task }) => (
  <TaskCardBox $hot={t.hot}>
    <CardId>{t.id}</CardId>
    <Tick $hot={t.hot} />
    <CardAddr><LimeD>D</LimeD>{t.addr}</CardAddr>
    <CardMeta>
      <MetaPart><SizeIcon /><span>0</span><Info size={9} color="#2db6e6" strokeWidth={1.200} /></MetaPart>
      <MetaPart><CalendarDays size={12} color="#b3bdc6" strokeWidth={.9} /><span>Apr 24</span></MetaPart>
      <MetaPart><Clock size={11} color="#aab4bd" strokeWidth={.9} /><span>{t.time}</span></MetaPart>
    </CardMeta>
    <CardSkills><SkillsTag $w={t.hot ? 0 : 119}>{t.skills}</SkillsTag><BuildingsIcon /><Duration>{t.dur}</Duration></CardSkills>
    <CardStatus>{t.status}</CardStatus>
  </TaskCardBox>
);

const RouteCard = ({ r }: { r: Rt }) => (
  <RouteCardBox>
    <RouteId>{r.id}</RouteId>
    <RouteTick />
    <RouteMid>
      <AvatarRing><Portrait {...r.face} /></AvatarRing>
      <RouteInfo>
        <NameRow><NameCell>{r.name}</NameCell><VehicleCell>{r.veh}</VehicleCell></NameRow>
        <StatRow>
          <Trips>0 / 6</Trips><ParcelIcon />
          <LoadPill>0%</LoadPill><Pipe /><Clock size={10} color="#c0c9d1" strokeWidth={.9} />
          <Meter>
            <MeterFill $c={r.util > 90 ? "#7ccb13" : "#0db3e4"} style={{ width: r.util + "%" }} />
            <MeterText>{r.util}%</MeterText>
          </Meter>
        </StatRow>
      </RouteInfo>
    </RouteMid>
    <MetricRow>
      <RouteIcon size={12} color="#bcc5cd" /><Km>{r.km}</Km>
      <Clock size={11} color="#a9b3bc" strokeWidth={.9} />
      <TimePill>8:00 - 17:00</TimePill>
      <CostIcon><BuildingsIcon /></CostIcon><Cost>{r.cost}</Cost>
    </MetricRow>
    <RouteSkills>{r.skills}</RouteSkills>
  </RouteCardBox>
);

const SearchBlock = ({ placeholder, sort, sortW, sortMl }: { placeholder: string; sort: string; sortW: number; sortMl: number }) => (
  <>
    <Field>{placeholder}</Field>
    <FilterBtn><FilterIcon><Funnel size={12} color="#2fc4d8" strokeWidth={1} /></FilterIcon><FilterLabel>Filter</FilterLabel></FilterBtn>
    <Preset>
      <PresetMain>Select preset<ChevronDown size={10} color="#c4ccd3" strokeWidth={1} /></PresetMain>
      <PresetMore><ChevronDown size={10} color="#7b8892" strokeWidth={1} /></PresetMore>
    </Preset>
    <Rule />
    <SortRow>
      <SortIcons><LayoutGrid size={12} color="#8a96a1" strokeWidth={1} /><BarsIcon /></SortIcons>
      <SortFaint>Sort by:</SortFaint>
      <SortChosen $w={sortW} $ml={sortMl}>{sort}</SortChosen>
      <ChevronDown size={10} color="#4a5661" strokeWidth={1.500} />
      <SortAsc>Asc</SortAsc><SortDesc>Desc</SortDesc>
    </SortRow>
    <ActionRow>
      <ActionCell><CheckDot /></ActionCell><ActionCell><MinusDot /></ActionCell>
      <ActionMenu>Actions (0)<ChevronDown size={11} color="#25b5e3" strokeWidth={2} /></ActionMenu>
    </ActionRow>
  </>
);

const railIcons = [
  <RouteIcon size={15} />, <Package size={15} color="#7f8e9c" strokeWidth={1} />, <CalendarClock size={15} color="#7f8e9c" strokeWidth={1} />,
  <UserPinIcon />, <MapPin size={16} color="#7f8e9c" strokeWidth={1} />, <Truck size={15} color="#9aa6b1" strokeWidth={1} />,
  <Store size={15} color="#9aa6b1" strokeWidth={1} />, <ChartLine size={15} color="#5f6f7e" strokeWidth={1} />, <CartIcon />,
  <ClipboardList size={15} color="#7f8e9c" strokeWidth={1} />, <RefreshCw size={15} color="#5f6f7e" strokeWidth={1} />, <NodesIcon size={15} />,
  <Users size={15} color="#7f8e9c" strokeWidth={1} />, <CircleHelp size={15} color="#25b5e3" strokeWidth={1.200} />,
];

export default function App() {
  return (
    <Page>
      <Global />
      <Rail>
        <LogoCell><LogoMark /></LogoCell>
        <RailMenu><Menu size={14} color="#c6ced5" strokeWidth={1} /></RailMenu>
        {railIcons.map((icon, i) => <RailIcon key={i}>{icon}</RailIcon>)}
        <BuildInfo>07:46<br />Apr 23<br />v1.0.577<BuildHash>2e3c4ee3a</BuildHash></BuildInfo>
      </Rail>
      <Main>
        <TopBar>
          <AddCell><AddButton><AddTaskIcon /></AddButton></AddCell>
          <TopTab $on $w={96}><RouteIcon size={15} color="#2cbbe9" /><span>Planning</span></TopTab>
          <TopTab $w={119}><CalendarDays size={14} color="#4d5a66" strokeWidth={1} /><span>Range Planning</span></TopTab>
          <TopTab><MapPin size={14} color="#67737e" strokeWidth={1} /><span>Live</span></TopTab>
          <Account>
            <AccountIcon><IdCard size={12} color="#aab4bd" strokeWidth={1} /></AccountIcon>
            <span>acme-services</span><AccountSep>|</AccountSep><span>admin</span><AccountSep>|</AccountSep><span>marry@acme.com</span>
            <UserButton><WarnUserIcon /><ChevronDown size={9} color="#7b8892" strokeWidth={1.300} /></UserButton>
          </Account>
        </TopBar>
        <Body>
          <SideStrip>
            <SideTab $h={46}><X size={8} color="#8d99a4" strokeWidth={1.200} /><VerticalUp>Tasks</VerticalUp></SideTab>
          </SideStrip>
          <Panel $w={219} $pt={15} $pl={12} $pr={13}>
            <SearchBlock placeholder="Search for tasks" sort="Created" sortW={46} sortMl={11} />
            <ListRow $mt={18} $h={332}>
              <CardList $w={187} $ml={1} $gap={19}>{tasks.map((t) => <TaskCard key={t.id} t={t} />)}</CardList>
              <Track $ml={4}><TrackUp /><TrackThumb $h={12} /><TrackDown /></Track>
            </ListRow>
            <PanelFoot $ml={12} $mr={13} $mt={10} />
            <Showing><Faint>Showing</Faint> 2076 <Faint>results of</Faint> 2076 total</Showing>
            <LateBar>
              <LateIcon><Funnel size={11} color="#fff" strokeWidth={1.100} /></LateIcon>
              <LateCount>0</LateCount><LateLabel>Late tasks</LateLabel>
              <LateMore><ChevronUp size={11} color="#fff" strokeWidth={2} /></LateMore>
            </LateBar>
            <FinalRow><span>Filter by status:</span><FinalRight>Show finalized<Toggle><ToggleKnob /></Toggle></FinalRight></FinalRow>
            <StatusGrid $mt={6} $mx={-1} $c2={65}>
              <StatusBox $t="on"><StatusNum>2076</StatusNum><StatusName>Assigned</StatusName></StatusBox>
              <StatusBox $t="cyan"><StatusNum>0</StatusNum><StatusName>Unassigned</StatusName></StatusBox>
              <StatusBox $t="red"><StatusNum>0</StatusNum><StatusName>Unviable</StatusName></StatusBox>
            </StatusGrid>
          </Panel>
          <Workspace>
            <NavBar>
              <OpsTab>Operations Map<X size={8} color="#d8e3ea" strokeWidth={1.600} /></OpsTab>
              <NavItems>
                <NavItem $gap={19}><Settings size={11} color="#d6ac25" strokeWidth={1.300} /></NavItem>
                <NavItem $gap={20}><CalendarDays size={12} color="#48b25a" strokeWidth={1.100} /><span>Range</span></NavItem>
                <NavItem $gap={10}><NodesIcon size={12} color="#27c0d6" /><span>Teams</span></NavItem>
                <NavItem $gap={33}><ChevronDown size={11} color="#fff" strokeWidth={2} /></NavItem>
                <NavItem $gap={6}><Columns3 size={12} color="#8a8b84" strokeWidth={1} /><span>Map Display</span></NavItem>
                <ChevronDown size={11} color="#fff" strokeWidth={2} />
              </NavItems>
            </NavBar>
            <DateSwitch>
              <ChevronLeft size={14} color="#6f7b86" strokeWidth={1} />
              <DateCal><Calendar size={12} color="#bfc7ce" strokeWidth={1} /></DateCal>
              <DateLabel>Tomorrow</DateLabel>
              <ChevronDown size={10} color="#59646e" strokeWidth={1.400} />
              <DateNext><ChevronRight size={14} color="#6f7b86" strokeWidth={1} /></DateNext>
            </DateSwitch>
            <Stage>
              <MapArea>
                <MapCanvas />
                <HelpChip><CircleHelp size={12} color="#fff" strokeWidth={1.200} /></HelpChip>
                <Reopt>
                  <ReoptIcon><RouteIcon size={18} color="#fff" sw={1.300} /></ReoptIcon>
                  <ReoptTitle>REOPTIMIZE</ReoptTitle><ReoptSub>tomorrow</ReoptSub>
                  <ReoptMenu><CalendarDays size={13} color="#fff" strokeWidth={1.300} /><ChevronUp size={12} color="#fff" strokeWidth={2.400} /></ReoptMenu>
                </Reopt>
                <ZoomBox>
                  <ZoomCell><Plus size={12} color="#333" strokeWidth={2.600} /></ZoomCell>
                  <ZoomCell><Minus size={12} color="#333" strokeWidth={2.600} /></ZoomCell>
                  <ZoomCell><Compass><ArrowUp /><ArrowDown /></Compass></ZoomCell>
                </ZoomBox>
                <InfoChip>i</InfoChip>
                <MapTools>
                  <ChevronRight size={12} color="#c3d2dc" strokeWidth={1.300} />
                  <ToolItem $on $w={60} $ml={3}><RouteIcon size={11} color="#fff" />All routes</ToolItem>
                  <ToolItem $w={84}><RouteIcon size={11} color="#7f9bad" />Detailed routes</ToolItem>
                  <ToolItem $on $w={74}><MapPin size={11} color="#fff" strokeWidth={1.200} />Tasks hidden</ToolItem>
                  <ToolItem $w={78}><ZoneIcon />Zones hidden</ToolItem>
                  <ToolItem $w={80}><Funnel size={11} color="#9fb3c2" strokeWidth={1} />Filter on select</ToolItem>
                  <ToolSep />
                  <ToolIcon><CursorOffIcon /></ToolIcon>
                  <ToolIcon><BarsIcon size={11} color="#d7e2ea" t={2.600} /></ToolIcon>
                  <ToolIcon><SquareCheck size={12} color="#a9bdcb" strokeWidth={1} /></ToolIcon>
                  <ToolIcon><RouteIcon size={12} color="#a9bdcb" /></ToolIcon>
                  <ToolIcon><RefreshCw size={10} color="#a9bdcb" strokeWidth={1.200} /></ToolIcon>
                </MapTools>
              </MapArea>
              <Panel $w={214} $pt={16} $pl={12} $pr={11}>
                <SearchBlock placeholder="Search for drivers / vehicles / routes" sort="First name" sortW={52} sortMl={3} />
                <ListRow $mt={18} $h={325}>
                  <CardList $w={184} $ml={0} $gap={19}>{routes.map((r) => <RouteCard key={r.id} r={r} />)}</CardList>
                  <Track $ml={6}><TrackUp /><TrackThumb $h={75} /><TrackDown /></Track>
                </ListRow>
                <PanelFoot $ml={8} $mr={3} $mt={12} />
                <Showing><Faint>Showing</Faint> 120 <Faint>results of</Faint> 125 total</Showing>
                <ExportRow>
                  <ExportBtn>Exports</ExportBtn><ExportMore><ChevronDown size={10} color="#7b8892" strokeWidth={1} /></ExportMore>
                  <Recurring><RouteIcon size={12} color="#8d99a4" />Recurring routes</Recurring>
                </ExportRow>
                <FilterBy>Filter by status:</FilterBy>
                <StatusGrid $mt={3} $mx={0} $c2={63}>
                  <StatusBox $t="on"><StatusNum>120</StatusNum><StatusName>Assigned</StatusName></StatusBox>
                  <StatusBox $t="off"><StatusNum>1</StatusNum><StatusName>Unassigned</StatusName></StatusBox>
                  <StatusBox $t="off"><StatusNum>4</StatusNum><StatusName>Unavailable</StatusName></StatusBox>
                </StatusGrid>
              </Panel>
              <RightStrip>
                <SideTab $h={87}><VerticalDown>Drivers / Routes</VerticalDown><X size={8} color="#8d99a4" strokeWidth={1.200} /></SideTab>
              </RightStrip>
            </Stage>
          </Workspace>
        </Body>
        <BottomTabs><BottomTab $w={90}>Route Timelines</BottomTab><BottomTab $w={76}>Route Tasks</BottomTab></BottomTabs>
        <StatusBar>
          <Stat>Routes: <StatVal>120</StatVal></Stat>
          <Stat>Total length: <StatVal>24440.86 km</StatVal></Stat>
          <Stat>Total duration: <StatVal>491:50h</StatVal></Stat>
          <Stat>Tasks/h: <StatVal>4.22</StatVal></Stat>
          <Stat>Tasks/route: <StatVal>17.30</StatVal></Stat>
          <Stat>Avg. vehicle load: <Bar $w={69}><BarFill style={{ width: "87%" }}>89%</BarFill></Bar><Info size={9} color="#2aa4d8" strokeWidth={1.200} /></Stat>
          <Stat>Avg. driver util.: <Bar $w={68}><BarFill style={{ width: "84%" }}>85%</BarFill></Bar></Stat>
          <Stat>Total cost: <StatVal>$103,147.5</StatVal></Stat>
        </StatusBar>
      </Main>
    </Page>
  );
}
